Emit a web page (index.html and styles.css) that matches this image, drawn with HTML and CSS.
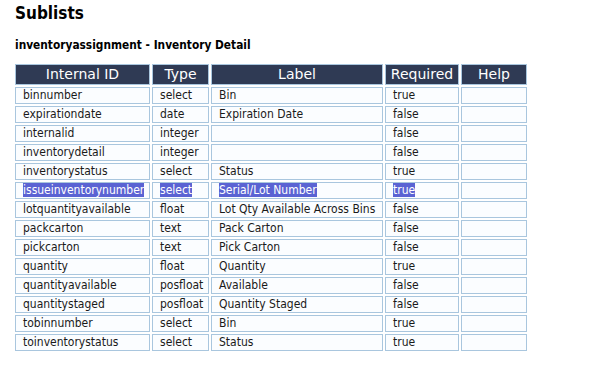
FILE: index.html
```html
<!DOCTYPE html>
<html>
<head>
<meta charset="utf-8">
<link rel="stylesheet" href="styles.css">
</head>
<body>
<h1 class="title">Sublists</h1>
<h2 class="subtitle">inventoryassignment - Inventory Detail</h2>
<table class="fields">
  <colgroup>
    <col class="c1"><col class="c2"><col class="c3"><col class="c4"><col class="c5">
  </colgroup>
  <thead>
    <tr><th>Internal ID</th><th>Type</th><th>Label</th><th>Required</th><th>Help</th></tr>
  </thead>
  <tbody>
    <tr><td>binnumber</td><td>select</td><td>Bin</td><td>true</td><td></td></tr>
    <tr><td>expirationdate</td><td>date</td><td>Expiration Date</td><td>false</td><td></td></tr>
    <tr><td>internalid</td><td>integer</td><td></td><td>false</td><td></td></tr>
    <tr><td>inventorydetail</td><td>integer</td><td></td><td>false</td><td></td></tr>
    <tr><td>inventorystatus</td><td>select</td><td>Status</td><td>true</td><td></td></tr>
    <tr><td><span class="sel">issueinventorynumber</span></td><td><span class="sel">select</span></td><td><span class="sel">Serial/Lot Number </span></td><td><span class="sel">true</span></td><td></td></tr>
    <tr><td>lotquantityavailable</td><td>float</td><td>Lot Qty Available Across Bins</td><td>false</td><td></td></tr>
    <tr><td>packcarton</td><td>text</td><td>Pack Carton</td><td>false</td><td></td></tr>
    <tr><td>pickcarton</td><td>text</td><td>Pick Carton</td><td>false</td><td></td></tr>
    <tr><td>quantity</td><td>float</td><td>Quantity</td><td>true</td><td></td></tr>
    <tr><td>quantityavailable</td><td>posfloat</td><td>Available</td><td>false</td><td></td></tr>
    <tr><td>quantitystaged</td><td>posfloat</td><td>Quantity Staged</td><td>false</td><td></td></tr>
    <tr><td>tobinnumber</td><td>select</td><td>Bin</td><td>true</td><td></td></tr>
    <tr><td>toinventorystatus</td><td>select</td><td>Status</td><td>true</td><td></td></tr>
  </tbody>
</table>
</body>
</html>
```
FILE: styles.css
```css
html, body {
  margin: 0;
  padding: 0;
  background: #ffffff;
}
body {
  padding: 0 13px;
  font-family: "DejaVu Sans Condensed", "DejaVu Sans", Verdana, sans-serif;
  color: #1a1a1a;
}
.title {
  font-size: 17px;
  font-weight: bold;
  margin: 0;
  padding-top: 2px;
  padding-left: 2px;
  line-height: 22px;
  color: #000;
}
.subtitle {
  font-size: 11.8px;
  font-weight: bold;
  margin: 0;
  padding-top: 14px;
  padding-left: 2px;
  line-height: 14px;
  color: #000;
}
.fields {
  margin-top: 10px;
  border-collapse: separate;
  border-spacing: 2px;
  table-layout: fixed;
  width: 516px;
  font-size: 12px;
}
.c1 { width: 135px; }
.c2 { width: 57px; }
.c3 { width: 172px; }
.c4 { width: 74px; }
.c5 { width: 66px; }
.fields th {
  background: #2f3a54;
  color: #ffffff;
  font-family: "DejaVu Sans", Verdana, sans-serif;
  font-weight: normal;
  font-size: 14px;
  border: 1px solid #a9c6de;
  height: 19px;
  padding: 0;
  text-align: center;
  line-height: 19px;
}
.fields td {
  background: #fbfdff;
  border: 1px solid #a9c6de;
  height: 15px;
  padding: 0 0 0 7px;
  line-height: 15px;
  white-space: nowrap;
  overflow: hidden;
}
.sel {
  background: #5a63d3;
  color: #ffffff;
}
```
